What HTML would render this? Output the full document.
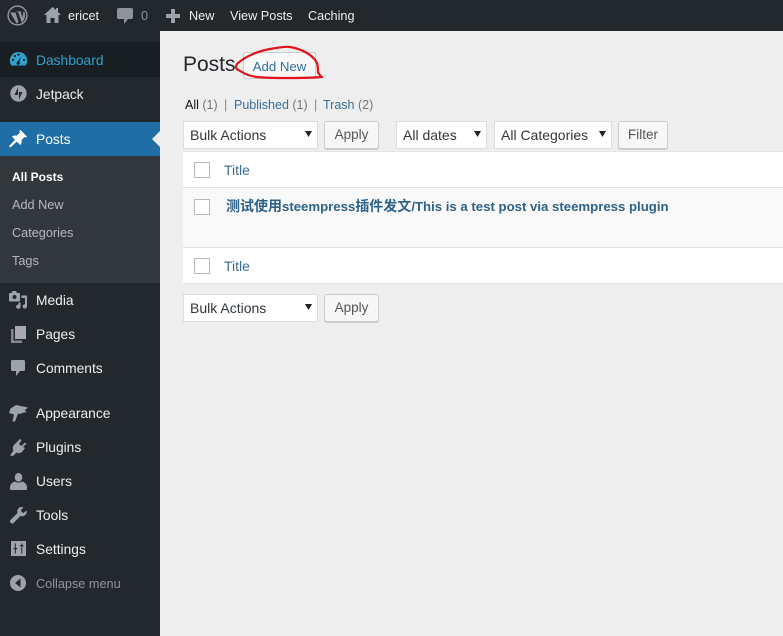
<!DOCTYPE html>
<html><head><meta charset="utf-8">
<style>
*{box-sizing:border-box}
html,body{margin:0;padding:0;width:783px;height:636px;overflow:hidden;background:#eee;font-family:"Liberation Sans","Noto Sans CJK SC",sans-serif;font-size:13.5px;color:#444}
.a{position:absolute;white-space:nowrap}
#bar{left:0;top:0;width:783px;height:31px;background:#23282d;position:absolute}
#side{left:0;top:31px;width:160px;height:605px;background:#23282d;position:absolute}
.m{position:absolute;left:36px;color:#eee;font-size:13.800px;line-height:20px;white-space:nowrap;margin-top:1px}
.s{position:absolute;left:12px;color:#b4b9be;font-size:12.700px;line-height:18px;white-space:nowrap}
.t{position:absolute;color:#eee;font-size:12.700px;line-height:18px;white-space:nowrap}
svg{position:absolute;overflow:visible}
.sel{position:absolute;height:28px;background:#fff;border:1px solid #ddd;font-size:14px;line-height:26px;padding-left:6px;color:#32373c;white-space:nowrap}
.sel:after{content:"";position:absolute;right:5px;top:9px;width:7px;height:6px;background:#222;clip-path:polygon(0 0,100% 0,50% 100%)}
.btn{position:absolute;height:28px;background:#f7f7f7;border:1px solid #ccc;border-radius:3px;box-shadow:0 1px 0 #ccc;font-size:13.5px;line-height:26px;text-align:center;color:#555}
.cb{position:absolute;left:194px;width:16px;height:16px;background:#fff;border:1px solid #b4b9be}
.l{color:#3a6f94}
.f{position:absolute;top:96px;font-size:12.500px;line-height:18px;color:#72777c;white-space:nowrap}
</style></head><body>
<div id="bar"></div>
<div id="side"></div>
<div class="a" style="left:0;top:42px;width:160px;height:35px;background:#191e23"></div>
<div class="a" style="left:0;top:122px;width:160px;height:34px;background:#1f6ea6"></div>
<div class="a" style="left:0;top:156px;width:160px;height:127px;background:#32373c"></div>
<div class="a" style="left:152px;top:131px;border:8px solid transparent;border-left:0;border-right-color:#eee"></div>

<svg style="left:7px;top:5px" width="21" height="21" viewBox="0 0 21 21"><circle cx="10.500" cy="10.500" r="9.400" fill="none" stroke="#8f9499" stroke-width="1.500"/><path d="M3.200 7.500h5.300l3 9.500-1.800 1.600zM8.500 6.500h6.300l-1 1 2.800 7.800-1.700 2.700-3.500-10.500zM16.200 7l1.400.2c.9 2.900.4 5.900-1 8.300l-1-2.300z" fill="#8f9499"/></svg>
<svg style="left:44px;top:7px" width="17" height="16" viewBox="0 0 17 16"><path d="M8.500 0L0 8h2.500v8h4v-5h4v5h4V8H17L14 5V1h-2v2z" fill="#9ea3a8"/></svg>
<div class="t" style="left:68px;top:7px">ericet</div>
<svg style="left:117px;top:8px" width="16" height="16" viewBox="0 0 16 16"><path d="M2 0h12a2 2 0 0 1 2 2v7a2 2 0 0 1-2 2h-3l-4 5v-5H2a2 2 0 0 1-2-2V2a2 2 0 0 1 2-2z" fill="#8f9499"/></svg>
<div class="t" style="left:141px;top:7px;color:#8f9499">0</div>
<svg style="left:166px;top:9px" width="14" height="14" viewBox="0 0 14 14"><path d="M5 0h4v5h5v4H9v5H5V9H0V5h5z" fill="#9ea3a8"/></svg>
<div class="t" style="left:189px;top:7px">New</div>
<div class="t" style="left:230px;top:7px">View Posts</div>
<div class="t" style="left:308px;top:7px">Caching</div>

<svg style="left:10px;top:52px" width="17" height="16" viewBox="0 0 17 16"><path d="M8.500 0a8.500 8.500 0 0 1 7 13.500H1.500A8.500 8.500 0 0 1 8.500 0z" fill="#2ea2cc"/><circle cx="3" cy="8" r="1.100" fill="#191e23"/><circle cx="5" cy="4" r="1.100" fill="#191e23"/><circle cx="8.500" cy="2.600" r="1.100" fill="#191e23"/><circle cx="14" cy="8" r="1.100" fill="#191e23"/><path d="M11 4.500L9.300 9.800a1.700 1.700 0 1 1-1.600-.3z" fill="#191e23"/></svg>
<div class="m" style="top:50px;color:#2ea2cc">Dashboard</div>
<svg style="left:10px;top:85px" width="17" height="17" viewBox="0 0 17 17"><circle cx="8.500" cy="8.500" r="8.200" fill="#9ea3a8"/><path d="M8 2.500v7.500H4.500zM9 14.500V7h3.500z" fill="#23282d"/></svg>
<div class="m" style="top:84px">Jetpack</div>
<svg style="left:9px;top:130px" width="18" height="18" viewBox="0 0 18 18"><path d="M11.500 0L18 6.500l-1.300 1-1.200-.5-3 3.300c.4 2 .1 3.500-1 4.700L7.700 11.600 1.500 17.500 0 16 6 9.800 3 6.700c1.200-1.100 3-1.400 4.600-1L10.900 2.700 10.500 1z" fill="#fff"/></svg>
<div class="m" style="top:129px;color:#fff">Posts</div>
<div class="s" style="top:168px;color:#fff;font-weight:bold;font-size:12px">All Posts</div>
<div class="s" style="top:196px">Add New</div>
<div class="s" style="top:224px">Categories</div>
<div class="s" style="top:252px">Tags</div>

<svg style="left:9px;top:291px" width="19" height="18" viewBox="0 0 19 18"><path d="M3.500 0h3.500l1 2h2a1 1 0 0 1 1 1v6.500a1 1 0 0 1-1 1H1a1 1 0 0 1-1-1V3a1 1 0 0 1 1-1h1.500z" fill="#9ea3a8"/><circle cx="5.500" cy="6" r="2" fill="#23282d"/><path d="M12.500 4.500H18v10.800a2.200 2.200 0 1 1-2-2.100V7h-3.500zM11.500 11.500v4a2.200 2.200 0 1 1-2-2V11.500z" fill="#9ea3a8"/></svg>
<div class="m" style="top:290px">Media</div>
<svg style="left:11px;top:326px" width="15" height="17" viewBox="0 0 15 17"><path d="M4 0h11v13H4z" fill="#a8a8ae"/><path d="M0 3h2.500v11.500H11V17H0z" fill="#8a8594"/></svg>
<div class="m" style="top:324px">Pages</div>
<svg style="left:11px;top:360px" width="14" height="16" viewBox="0 0 14 16"><path d="M1.500 0h11A1.500 1.500 0 0 1 14 1.500v8a1.500 1.500 0 0 1-1.500 1.500H9l-4 5v-5H1.500A1.500 1.500 0 0 1 0 9.500v-8A1.500 1.500 0 0 1 1.500 0z" fill="#9ea3a8"/></svg>
<div class="m" style="top:358px">Comments</div>
<svg style="left:9px;top:405px" width="19" height="17" viewBox="0 0 19 17"><path d="M7 0L19 2.500l-3.500 3L18 7l-5 1-1.500 1-2.500-.5-3 8H3.500l1.500-7L0 8 1.500 3.500z" fill="#9ea3a8"/></svg>
<div class="m" style="top:403px">Appearance</div>
<svg style="left:10px;top:439px" width="17" height="17" viewBox="0 0 17 17"><path d="M10 0l1.500 1L9 5l2.500 2L15 3.500l1.500 1L13 8l2 1-3 4c-2 1.500-4 1.500-5.500.5L3 17l-3-.5 3.500-5C2.500 10 2.500 8 4 6L6 4z" fill="#9ea3a8"/></svg>
<div class="m" style="top:437px">Plugins</div>
<svg style="left:10px;top:473px" width="17" height="17" viewBox="0 0 17 17"><ellipse cx="8.500" cy="4.300" rx="3.800" ry="4.300" fill="#9ea3a8"/><path d="M0 14c0-3 3-5 5-5.500 2 1.500 5 1.500 7 0 2 .5 5 2.500 5 5.500v2a1 1 0 0 1-1 1H1a1 1 0 0 1-1-1z" fill="#9ea3a8"/></svg>
<div class="m" style="top:471px">Users</div>
<svg style="left:10px;top:507px" width="17" height="17" viewBox="0 0 17 17"><path d="M12 0a4.500 4.500 0 0 0-4.500 6L0 13.500c-.5 1.500 1.500 3.500 3 3L10.500 9A4.500 4.500 0 0 0 16.500 3.500L13.500 6 11.500 5 11 3l2.500-2.800z" fill="#9ea3a8"/></svg>
<div class="m" style="top:505px">Tools</div>
<svg style="left:11px;top:541px" width="15" height="15" viewBox="0 0 15 15"><path d="M0 0h15v15H0z" fill="#9ea3a8"/><path d="M3.800 2.500h1v4.500h1.200v1.200H4.800v4.300h-1V8.200H2.600V7h1.200zM10.300 2.500h1V4h1.200v1.200h-1.200v7.300h-1V5.200H9.100V4h1.200z" fill="#23282d"/></svg>
<div class="m" style="top:539px">Settings</div>
<svg style="left:10px;top:575px" width="16" height="16" viewBox="0 0 16 16"><circle cx="8" cy="8" r="8" fill="#9ea3a8"/><path d="M10.500 3.500v9L5 8z" fill="#23282d"/></svg>
<div class="m" style="top:573px;color:#8f9499;font-size:12.700px">Collapse menu</div>

<div class="a" style="left:183px;top:50px;font-size:21px;line-height:30px;color:#23282d">Posts</div>
<div class="a" style="left:243px;top:52px;width:73px;height:27px;background:#f7f7f7;border:1px solid #ccc;border-radius:2px;text-align:center;line-height:27px;font-size:13.200px;color:#33709b">Add New</div>
<svg style="left:0;top:0" width="783" height="636" viewBox="0 0 783 636"><path d="M322 77C310 78 298 78 287 78C276 78 266 78 257 77C250 76 245 74 242 72C238 70 236 69 236 67C236 64 239 62 242 60C246 57 249 56 253 54C258 52 264 50 270 49C277 48 284 46 290 47C296 48 302 50 307 53C312 56 315 59 317 63C318 66 318 69 318 72C319 74 320 76 322 77" fill="none" stroke="#e2121c" stroke-width="2.200" stroke-linecap="round"/></svg>

<div class="f" style="left:185px"><span style="color:#111">All</span> (1)</div>
<div class="f" style="left:224px;color:#888">|</div>
<div class="f" style="left:234px"><span class="l">Published</span> (1)</div>
<div class="f" style="left:314px;color:#888">|</div>
<div class="f" style="left:323px"><span class="l">Trash</span> (2)</div>

<div class="sel" style="left:183px;top:121px;width:135px">Bulk Actions</div>
<div class="btn" style="left:324px;top:121px;width:55px">Apply</div>
<div class="sel" style="left:396px;top:121px;width:91px">All dates</div>
<div class="sel" style="left:494px;top:121px;width:118px">All Categories</div>
<div class="btn" style="left:618px;top:121px;width:50px">Filter</div>

<div class="a" style="left:183px;top:151px;width:600px;height:133px;background:#fff;border:1px solid #e5e5e5;border-right:0;border-left:0"></div>
<div class="a" style="left:183px;top:187px;width:600px;height:61px;background:#f9f9f9;border-top:1px solid #e1e1e1;border-bottom:1px solid #e1e1e1"></div>
<div class="cb" style="top:162px"></div>
<div class="a l" style="left:224px;top:161px;font-size:14px;line-height:18px">Title</div>
<div class="cb" style="top:199px"></div>
<div class="a l" style="left:226px;top:197px;font-size:14px;line-height:18px;font-weight:bold;color:#2f6288">测试使用<span style="font-size:13.200px">steempress</span>插件发文<span style="font-size:13.200px">/This is a test post via steempress plugin</span></div>
<div class="cb" style="top:258px"></div>
<div class="a l" style="left:224px;top:257px;font-size:14px;line-height:18px">Title</div>

<div class="sel" style="left:183px;top:294px;width:135px">Bulk Actions</div>
<div class="btn" style="left:324px;top:294px;width:55px">Apply</div>
</body></html>
